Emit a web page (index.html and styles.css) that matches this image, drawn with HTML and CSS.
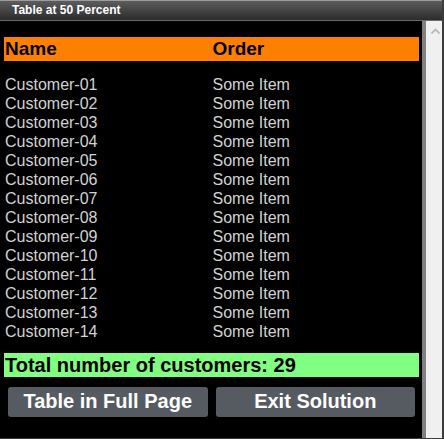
FILE: index.html
```html
<!DOCTYPE html>
<html>
<head>
<meta charset="utf-8">
<title>Table at 50 Percent</title>
<link rel="stylesheet" href="styles.css">
</head>
<body>
<div class="window">
  <div class="titlebar">Table at 50 Percent</div>
  <div class="main">
    <div class="content">
      <table class="grid">
        <thead>
          <tr class="head"><th>Name</th><th>Order</th></tr>
        </thead>
        <tbody>
          <tr><td>Customer-01</td><td>Some Item</td></tr>
          <tr><td>Customer-02</td><td>Some Item</td></tr>
          <tr><td>Customer-03</td><td>Some Item</td></tr>
          <tr><td>Customer-04</td><td>Some Item</td></tr>
          <tr><td>Customer-05</td><td>Some Item</td></tr>
          <tr><td>Customer-06</td><td>Some Item</td></tr>
          <tr><td>Customer-07</td><td>Some Item</td></tr>
          <tr><td>Customer-08</td><td>Some Item</td></tr>
          <tr><td>Customer-09</td><td>Some Item</td></tr>
          <tr><td>Customer-10</td><td>Some Item</td></tr>
          <tr><td>Customer-11</td><td>Some Item</td></tr>
          <tr><td>Customer-12</td><td>Some Item</td></tr>
          <tr><td>Customer-13</td><td>Some Item</td></tr>
          <tr><td>Customer-14</td><td>Some Item</td></tr>
        </tbody>
      </table>
      <div class="total">Total number of customers: 29</div>
      <div class="buttons">
        <button class="btn">Table in Full Page</button>
        <button class="btn">Exit Solution</button>
      </div>
    </div>
    <div class="scrollbar">
      <svg class="arrow" width="9" height="6" viewBox="0 0 9 6"><path d="M0.5 5.5 L4.5 1.5 L8.5 5.5" fill="none" stroke="#b4b4b4" stroke-width="1.6"/></svg>
    </div>
  </div>
</div>
</body>
</html>
```
FILE: styles.css
```css
html, body {
  margin: 0;
  padding: 0;
  background: #000;
}
.window {
  width: 444px;
  height: 439px;
  box-sizing: border-box;
  border-right: 2px solid #3c3c3c;
  border-bottom: 1px solid #3c3c3c;
  display: flex;
  flex-direction: column;
  font-family: "Liberation Sans", Arial, sans-serif;
}
.titlebar {
  height: 21px;
  box-sizing: border-box;
  border-top: 1px solid #9c9c9c;
  border-bottom: 1px solid #6a6a6a;
  background: linear-gradient(#5c5c5c, #2c2c2c);
  color: #fff;
  font-weight: bold;
  font-size: 12px;
  line-height: 18px;
  padding-left: 12px;
}
.main {
  flex: 1;
  display: flex;
  min-height: 0;
}
.content {
  flex: 1;
  background: #000;
  padding: 16px 3px 0 4px;
}
.grid {
  width: 100%;
  border-collapse: collapse;
  table-layout: fixed;
}
.grid th, .grid td {
  padding: 0 0 0 1px;
  text-align: left;
  width: 50%;
}
.head th {
  background: #ff8000;
  color: #000;
  font-size: 19px;
  font-weight: bold;
  height: 24px;
  line-height: 24px;
}
.grid tbody::before {
  content: "";
  display: table-row;
  height: 14px;
}
.grid td {
  color: #d2d2d2;
  font-size: 16px;
  line-height: 19px;
  height: 19px;
}
.total {
  margin-top: 12px;
  background: #80ff80;
  color: #000;
  font-weight: bold;
  font-size: 20px;
  height: 24px;
  line-height: 24px;
  padding-left: 1px;
}
.buttons {
  display: flex;
  gap: 8px;
  margin: 10px 4px 0 4px;
}
.btn {
  flex: 1;
  height: 30px;
  background: #565b62;
  color: #fff;
  border: none;
  border-radius: 3px;
  font-family: "Liberation Sans", Arial, sans-serif;
  font-weight: bold;
  font-size: 20px;
  padding: 0 0 2px 0;
}
.scrollbar {
  width: 16px;
  border-left: 4px solid #808080;
  background: #f0f0f0;
  display: flex;
  justify-content: center;
  align-items: flex-start;
}
.arrow {
  margin-top: 7px;
  margin-left: 2px;
}
```
